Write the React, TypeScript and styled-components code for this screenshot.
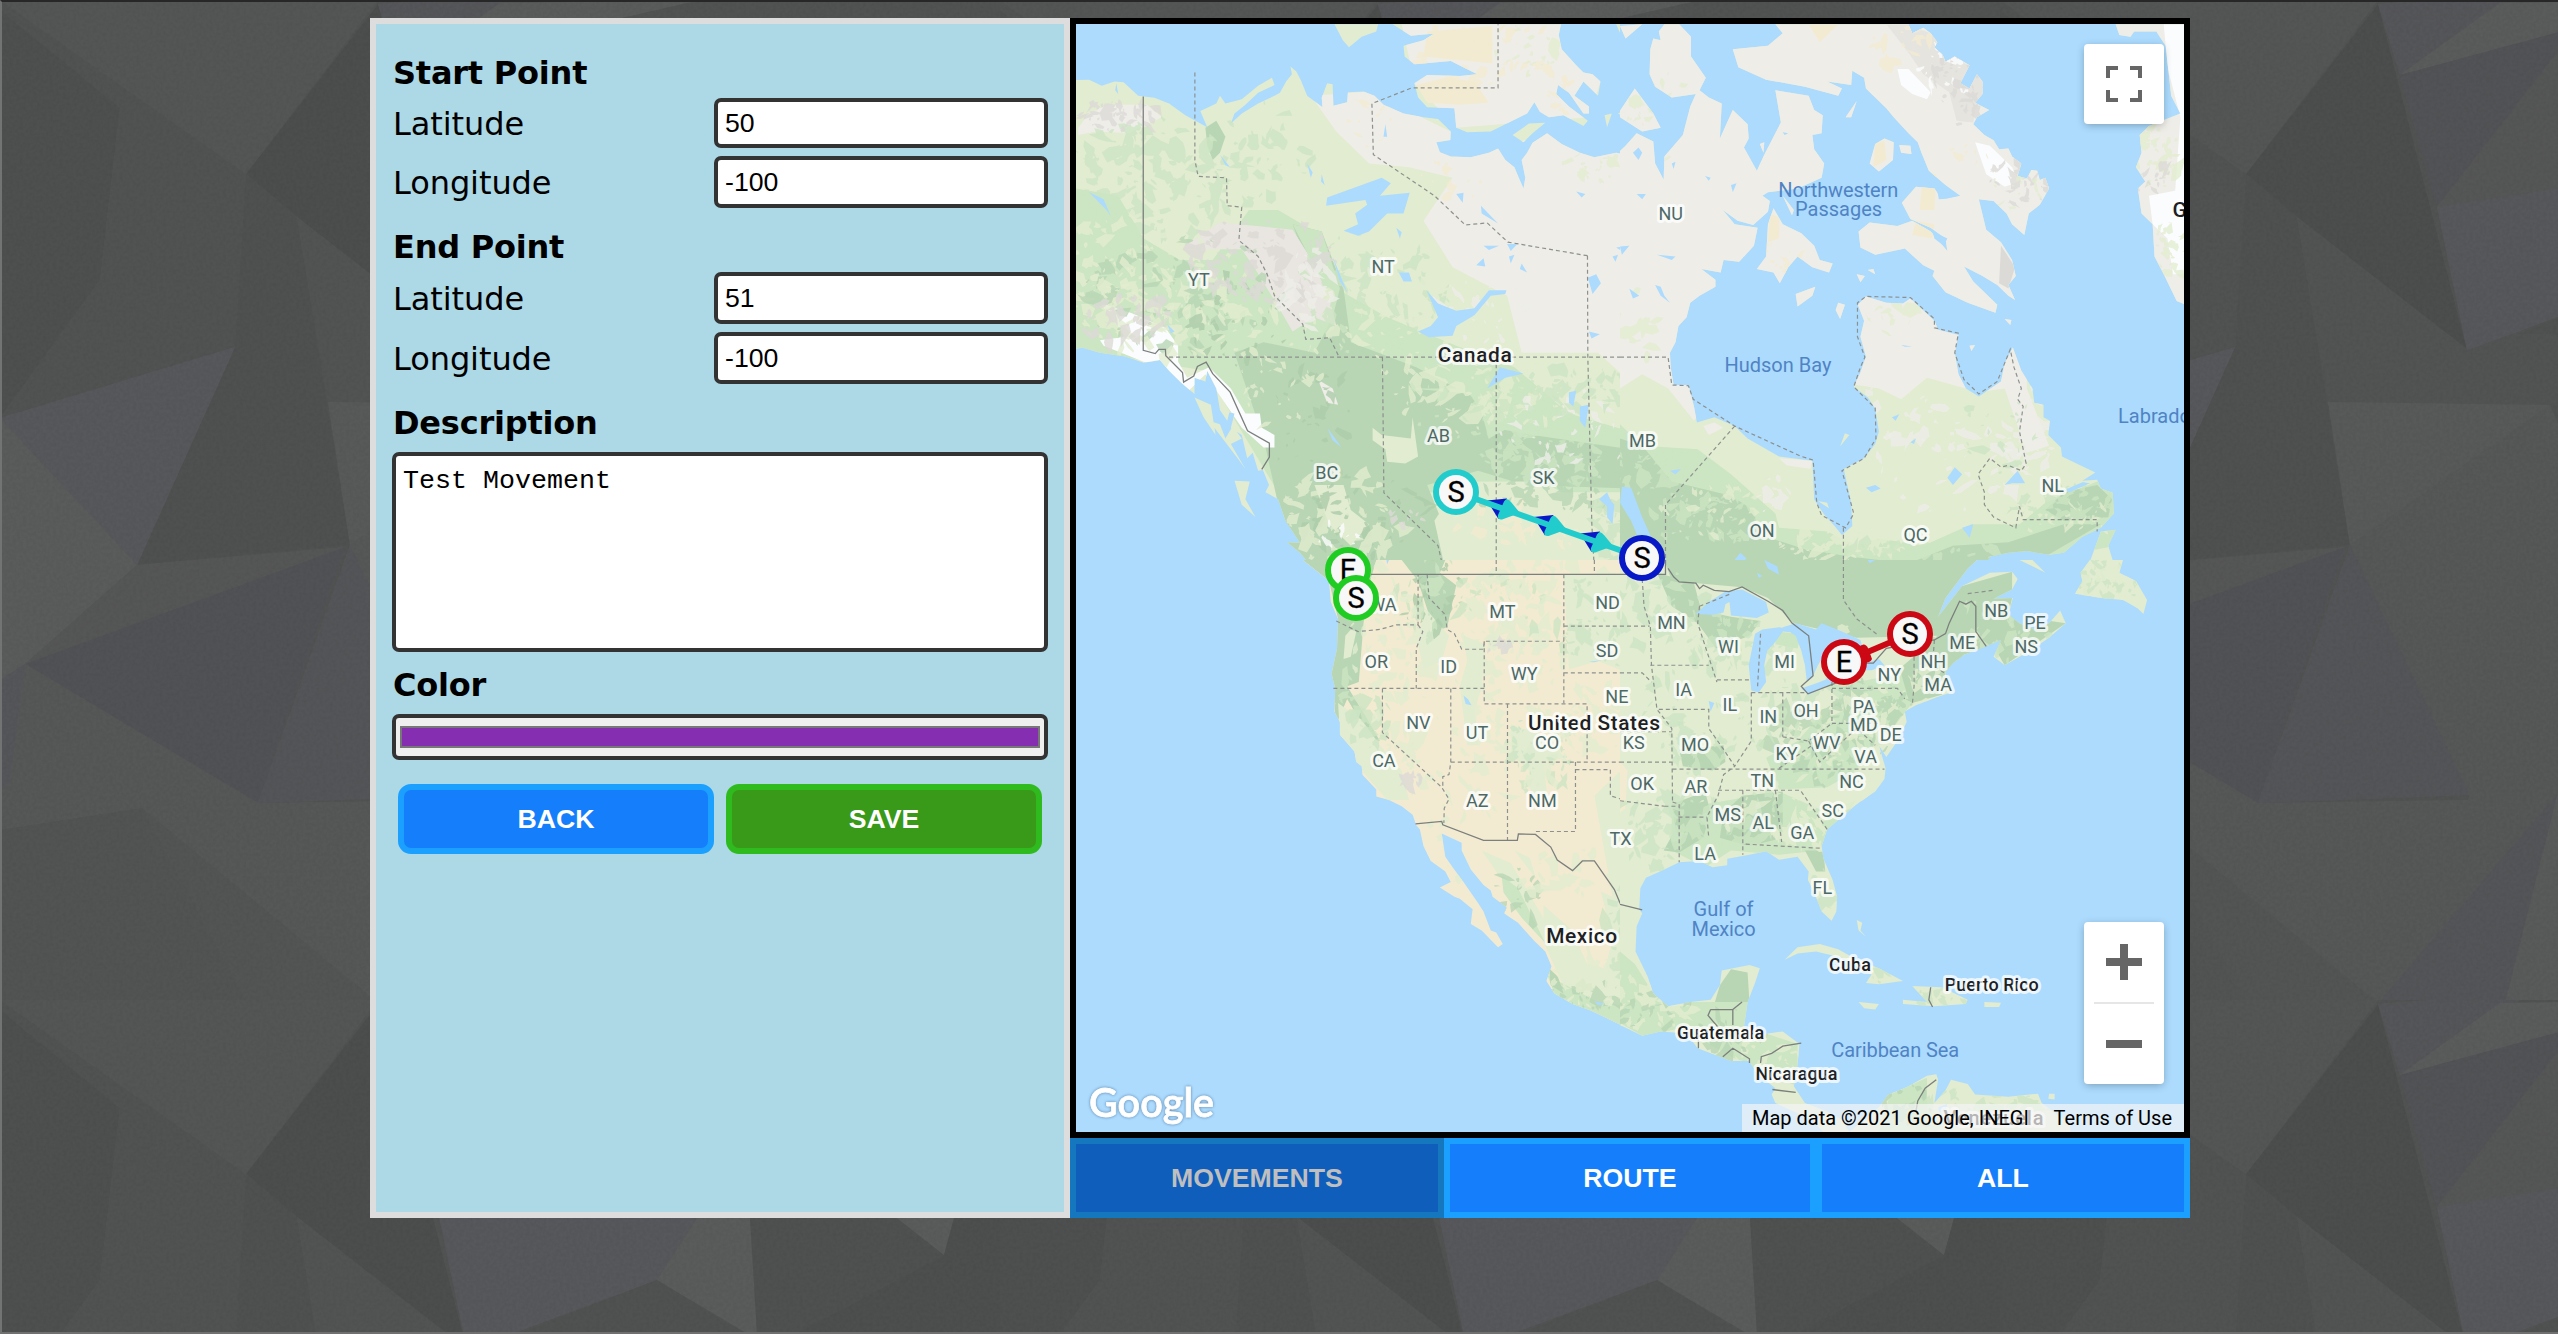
import React from "react";
import styled, { createGlobalStyle } from "styled-components";

const GlobalStyle = createGlobalStyle`
  * { box-sizing: border-box; }
  body { margin: 0; background: #535554; }
`;

/* ---------- page shell ---------- */

const Page = styled.div`
  position: relative;
  width: 100%;
  height: 1334px;
  display: flex;
  justify-content: center;
  align-items: flex-start;
  padding: 16px 0 0 2px;
  border-top: 2px solid #262726;
  border-bottom: 2px solid #6f706f;
  border-left: 2px solid #727473;
  overflow: hidden;
`;

const Backdrop = styled.svg`
  position: absolute;
  inset: -2px 0 0 -2px;
  width: 2558px;
  height: 1334px;
`;

const Workspace = styled.main`
  position: relative;
  display: flex;
  width: 1820px;
  height: 1200px;
  margin-right: 2px;
`;

/* ---------- form ---------- */

const FormPanel = styled.form`
  display: flex;
  flex-direction: column;
  width: 700px;
  padding: 26px 16px 0;
  border: 6px solid #dddddd;
  background: #add8e6;
  font-family: Verdana, "DejaVu Sans", sans-serif;
  font-size: 32px;
  color: #000;
`;

const Heading = styled.h2<{ $gap?: number }>`
  display: flex;
  align-items: center;
  height: 48px;
  margin: ${(p) => p.$gap ?? 0}px 0 0;
  padding: 0 0 2px 1px;
  font-size: 32px;
  font-weight: 700;
  letter-spacing: -0.22px;
  white-space: pre;
`;

const Field = styled.label<{ $height?: number; $gap?: number }>`
  display: grid;
  grid-template-columns: 322px 334px;
  height: ${(p) => p.$height ?? 52}px;
  margin-top: ${(p) => p.$gap ?? 0}px;
`;

const FieldName = styled.span`
  display: flex;
  align-items: center;
  padding: 1px 0 0 1px;
  letter-spacing: -0.08px;
`;

const Input = styled.input`
  width: 100%;
  height: 100%;
  padding: 0 7px;
  border: 4px solid #333333;
  border-radius: 7px;
  background: #fff;
  font: 26.67px Arial, "Liberation Sans", sans-serif;
  color: #000;
`;

const TextArea = styled.textarea`
  height: 200px;
  margin-top: 4px;
  padding: 10px 7px;
  border: 4px solid #333333;
  border-radius: 7px;
  background: #fff;
  font: 26.67px/30px "Courier New", "Liberation Mono", monospace;
  color: #000;
  resize: none;
`;

const ColorWell = styled.div`
  display: flex;
  height: 46px;
  margin-top: 4px;
  padding: 8px 4px;
  border: 4px solid #333333;
  border-radius: 7px;
  background: #efefef;
`;

const Swatch = styled.div`
  flex: 1;
  border: 2px solid #777777;
  background: #862eb1;
`;

const Actions = styled.div`
  display: flex;
  gap: 12px;
  margin-top: 24px;
  padding: 0 6px;
`;

const Button = styled.button<{ $edge: string; $fill: string }>`
  flex: 1;
  height: 70px;
  padding: 0;
  border: 6px solid ${(p) => p.$edge};
  border-radius: 13px;
  background: ${(p) => p.$fill};
  color: #fff;
  font: bold 26.67px Arial, "Liberation Sans", sans-serif;
`;

/* ---------- map column ---------- */

const MapColumn = styled.section`
  display: flex;
  flex-direction: column;
  width: 1120px;
`;

const MapFrame = styled.div`
  position: relative;
  height: 1120px;
  border: 6px solid #000;
  background: #acdbfe;
  overflow: hidden;
`;

const MapCanvas = styled.svg`
  display: block;
  width: 1108px;
  height: 1108px;
`;

const ControlStack = styled.div`
  position: absolute;
  inset: 20px 20px 48px auto;
  width: 80px;
  display: flex;
  flex-direction: column;
  justify-content: space-between;
`;

const ControlCard = styled.div`
  display: flex;
  flex-direction: column;
  align-items: center;
  border-radius: 4px;
  background: #fff;
  box-shadow: 0 2px 8px -1px rgba(0, 0, 0, 0.3);
`;

const IconButton = styled.button`
  display: flex;
  align-items: center;
  justify-content: center;
  width: 80px;
  height: 80px;
  padding: 0;
  border: 0;
  background: transparent;
`;

const Divider = styled.div`
  width: 60px;
  height: 2px;
  background: #e6e6e6;
`;

const Attribution = styled.div`
  position: absolute;
  right: 0;
  bottom: 0;
  display: flex;
  justify-content: space-between;
  align-items: center;
  width: 442px;
  height: 28px;
  padding: 0 12px 0 10px;
  background: rgba(245, 245, 245, 0.7);
  font: 20px/28px Roboto, Arial, sans-serif;
  color: #000;
  white-space: nowrap;
`;

const Tabs = styled.nav`
  display: grid;
  grid-template-columns: 374px 372px 374px;
  height: 80px;
`;

const Tab = styled.button`
  padding: 0;
  border: 6px solid #1ca0ff;
  background: #157efb;
  color: #fff;
  font: bold 26.67px Arial, "Liberation Sans", sans-serif;
  &:disabled {
    border-color: #1578bf;
    background: #105ebc;
    color: #bfbfbf;
  }
`;

/* ---------- backdrop facets, one 1000px repeat ---------- */

const facets: [string, string][] = [
  ["0,0 378,0 246,174", "#545655"],
  ["0,10 120,108 100,280 0,418", "#4e504f"],
  ["120,108 246,174 235,347 0,418 100,280", "#515352"],
  ["246,174 297,217 350,545 137,565 235,347", "#4f5150"],
  ["246,174 378,4 467,350 297,217", "#4c4e4d"],
  ["0,418 235,347 137,565", "#57585b"],
  ["0,418 137,565 25,664 0,680", "#5a5c5b"],
  ["137,565 345,547 25,664", "#555756"],
  ["25,664 345,547 258,803", "#515255"],
  ["25,664 258,803 470,800 378,1003 142,808 0,830 0,680", "#565857"],
  ["0,680 25,664 10,780 0,790", "#55565a"],
  ["258,803 350,545 470,795", "#545558"],
  ["0,830 142,808 378,1003 246,1000 0,1000", "#525453"],
  ["142,808 378,1003 246,1000", "#535554"],
  ["297,217 467,349 560,318 750,334 560,405 328,402", "#525453"],
  ["328,402 550,405 350,545", "#585a59"],
  ["350,545 550,405 600,520 600,790 470,795", "#565857"],
  ["470,795 558,790 600,900 378,1003", "#565857"],
  ["378,1003 558,793 505,1003", "#545558"],
  ["505,1003 558,793 700,1003", "#595b5a"],
  ["378,4 430,0 520,0 400,75", "#555659"],
  ["400,75 500,3 700,0 560,32", "#5a5c5b"],
  ["400,75 570,29 570,40 437,207", "#525356"],
  ["437,207 570,36 700,150 570,188", "#555756"],
  ["437,207 570,187 697,218 657,280 517,332 467,350", "#57585b"],
  ["697,218 750,218 757,334 748,334 657,280", "#5a5c5b"],
  ["657,280 748,336 517,334", "#505251"],
  ["750,218 897,218 944,255 795,334 757,334", "#4f5150"],
  ["897,218 954,218 944,255", "#5a5c5b"],
  ["795,334 944,255 954,218 1000,218 1000,360", "#4d4f4e"],
];

function BackdropArt() {
  return (
    <Backdrop viewBox="0 0 2558 1334" aria-hidden>
      <defs>
        <pattern id="facets" width="1000" height="1000" patternUnits="userSpaceOnUse">
          <rect width="1000" height="1000" fill="#515352" />
          {facets.map(([points, fill]) => (
            <polygon key={points} points={points} fill={fill} />
          ))}
        </pattern>
        <filter id="grain" x="0" y="0" width="100%" height="100%">
          <feTurbulence type="fractalNoise" baseFrequency="0.3" numOctaves="2" seed="4" />
          <feColorMatrix values="0 0 0 0 0  0 0 0 0 0  0 0 0 0 0  0.5 0 0 0 -0.17" />
        </filter>
      </defs>
      <rect width="2558" height="1334" fill="url(#facets)" />
      <rect width="2558" height="1334" filter="url(#grain)" opacity="0.16" />
    </Backdrop>
  );
}

/* ---------- map data ---------- */

const C = {
  water: "#acdbfe",
  pale: "#e2ecd0",
  mid: "#cce5c3",
  forest: "#b8d6b4",
  deep: "#accca9",
  barren: "#eeede8",
  rock: "#dcdad6",
  sand: "#f3ebd1",
  snow: "#fbfcfe",
};

// Speckle: cx, cy, rx, ry, count, size, colour
type Speckle = [number, number, number, number, number, number, string];

type Tile = {
  id: string;
  x: number;
  y: number;
  w: number;
  h: number;
  base: string;
  land: string;
  cover: [string, string][];
  speckles: Speckle[];
  lakes: string;
  solid: string;
  dashed: string;
};

const SIDE = 1568;

const tiles: Tile[] = [
  {
    id: "nw",
    x: 1060,
    y: 10,
    w: 570,
    h: 560,
    base: C.pale,
    land:
      "M40 196L80 195L115 212L150 200L175 202L215 240L260 246L300 262L345 295L405 328L386 283L430 262L440 240L455 262L500 250L545 212L583 190L590 210L545 232L510 265L480 290L470 318L500 290L545 262L590 240L605 232L622 200L638 180L634 158L650 172L662 195L680 240L722 272L720 245L735 205L750 208L752 268L790 258L792 230L835 228L865 240L890 265L945 290L1000 300L1040 305L1075 340L1074 364L1035 370L1045 398L1075 410L1130 412L1180 400L1205 388L1225 420L1250 440L1262 470L1275 500L1280 470L1270 420L1285 400L1300 372L1340 345L1380 375L1430 400L1470 412L1530 400L1568 408V1568H700L660 1520L625 1490L660 1492L620 1430L600 1370L565 1350L575 1330L558 1288L545 1290L530 1240L515 1255L500 1190L470 1170L480 1130L440 1120L430 1060L405 1010L400 1040L370 1030L370 1075L335 1045L300 1010L275 980L230 988L180 970L110 960L60 945L40 950Z" +
      "M755 40H875L870 60L830 75L795 104L778 85Z" +
      "M915 40L965 72L1030 66L1000 85L945 100L948 130L975 152L1075 143L1148 180L1100 185L1010 182L975 205L985 245L1010 272L1085 275L1090 330L1120 342L1185 340L1225 320L1285 290L1305 258L1320 285L1345 300L1385 295L1440 325L1452 310L1400 270L1365 235L1370 210L1400 232L1440 290L1455 290L1455 270L1415 240L1440 200L1480 240L1487 200L1465 180L1440 175L1420 155L1380 110L1372 70L1378 40Z" +
      "M1245 350L1290 318L1335 316L1300 345L1275 370ZM1498 295L1518 290L1505 328ZM1530 40H1568V80L1545 75ZM1535 290L1568 270V310Z" +
      "M370 1085L415 1105L428 1190L395 1140ZM410 1150L440 1160L455 1200L475 1165L500 1200L470 1215L510 1285L485 1250ZM480 1318L522 1320L510 1370L538 1420L500 1385ZM430 1050L470 1110L460 1150L440 1120Z",
    cover: [
      ["M690 240L850 228L1075 340V410L1205 388L1340 345L1568 400V1040L1480 960L1270 960L1230 800L1080 720L1000 590L1080 470L960 440L850 430L760 340Z", C.barren],
      ["M940 40H1378L1487 200L1455 300L1090 330L975 205Z", C.barren],
      ["M44 500L160 520L230 640L330 700L420 700L520 560L600 560L700 620L760 780L900 860L1090 940L1250 1000L1400 1130L1568 1180V1350H600L400 1010L44 950Z", C.mid],
      ["M640 600L720 620L780 780L800 930L980 1000L1130 1080L1190 1170L1300 1190L1568 1230V1340L1280 1330L1150 1290L1010 1330L1050 1430L1060 1568H640L560 1200L480 960L560 930L700 960L740 880Z", C.forest],
      ["M640 600L720 620L770 780L750 860L690 700Z", C.mid],
      ["M960 1060L1200 1080L1270 1150L1180 1200L1140 1060Z", C.mid],
      ["M1100 1320L1330 1320L1460 1400L1470 1568H1060L1030 1430Z", C.pale],
      ["M50 330L80 290L130 265L240 265L280 300L190 345L100 340L50 350Z", C.barren],
      ["M330 670L440 595L640 615L680 680L740 800L760 885L700 860L640 900L600 830L540 730L500 670Z", "#e9e6e1"],
      ["M110 820L200 850L290 890L325 940L325 985L350 1030L410 1000L470 1060L510 1130L550 1130L555 1170L590 1190L590 1225L560 1225L500 1170L440 1080L400 1020L350 1070L290 1000L230 985L120 940L110 925L180 915L140 860Z", C.snow],
      ["M400 330L430 310L455 355L440 400L420 420L405 380Z", C.forest],
      ["M860 1170L885 1190L965 1200L970 1140L985 1250L950 1270L900 1265L895 1230L860 1205Z", C.pale],
      ["M700 1330L780 1330L800 1400L850 1440L800 1500L740 1440Z", C.pale],
      ["M710 1035L750 1060L765 1105L735 1100Z", C.barren],
      ["M980 210L1060 190L1140 200L1180 260L1100 265L1010 260Z", C.sand],
      ["M1010 60L1190 45L1190 150L1000 130Z", C.sand],
    ],
    speckles: [
      [250, 480, 220, 160, 130, 30, C.mid],
      [200, 740, 200, 170, 90, 30, C.pale],
      [350, 800, 260, 150, 80, 24, C.forest],
      [320, 820, 260, 150, 120, 24, C.pale],
      [480, 880, 130, 130, 30, 20, C.deep],
      [560, 400, 140, 140, 40, 24, C.mid],
      [850, 800, 200, 160, 70, 26, C.mid],
      [900, 880, 230, 130, 70, 24, C.pale],
      [1170, 850, 120, 130, 30, 22, C.barren],
      [1200, 1080, 260, 110, 90, 26, C.pale],
      [1180, 1100, 250, 90, 50, 24, C.mid],
      [700, 1180, 110, 200, 40, 20, C.deep],
      [600, 1040, 120, 120, 30, 20, C.pale],
      [840, 1420, 170, 110, 40, 24, C.deep],
      [780, 1420, 160, 120, 60, 24, C.pale],
      [1370, 1250, 200, 80, 80, 24, C.mid],
      [1400, 1180, 190, 110, 40, 18, C.barren],
      [560, 700, 190, 110, 90, 24, C.rock],
      [690, 780, 70, 100, 40, 22, C.barren],
      [160, 300, 110, 40, 50, 18, C.rock],
      [180, 870, 120, 60, 40, 24, C.rock],
      [1250, 1460, 160, 90, 30, 26, C.sand],
      [1360, 1350, 220, 50, 50, 24, C.forest],
      [1520, 1460, 60, 100, 40, 24, C.mid],
      [1100, 480, 100, 70, 14, 20, C.sand],
      [1180, 120, 180, 90, 40, 24, C.sand],
      [1280, 110, 80, 70, 20, 22, C.pale],
      [1400, 250, 80, 60, 20, 18, C.sand],
      [1430, 1080, 140, 80, 50, 24, C.mid],
      [750, 1480, 70, 40, 14, 18, C.snow],
      [960, 1410, 50, 40, 12, 16, C.rock],
      [1450, 440, 90, 40, 20, 18, C.pale],
      [860, 310, 60, 80, 12, 18, C.sand],
    ],
    lakes:
      "M732 548L735 525L885 470L910 485L880 520L962 512L945 570L900 570L850 620L820 632L780 618L820 600L812 570L845 545L840 532Z" +
      "M1008 785L1040 822L1090 842L1140 835L1180 785L1228 785L1225 795L1185 800L1140 855L1090 885L1080 912L1015 916L985 900L1020 885L1040 860Z" +
      "M1175 1060L1210 1000L1275 1018L1225 1030ZM1452 750L1475 740L1488 765L1465 795ZM1158 548L1205 598L1160 570ZM1145 715L1165 695L1170 718ZM1165 660L1208 660L1180 672ZM1235 690L1250 685L1240 710Z" +
      "M1540 1340L1568 1330V1440L1545 1400ZM1400 1070L1420 1066L1412 1110L1400 1100ZM1430 1110L1455 1105L1445 1170L1430 1150ZM1483 1370L1505 1350L1515 1375L1525 1385L1520 1440L1505 1420L1505 1390Z" +
      "M932 735L960 735L968 760L945 760ZM680 430L695 455L690 470ZM720 460L728 490L718 480ZM440 405L468 440L455 435ZM895 320L900 355L890 355ZM925 610L940 622L935 640ZM155 205L160 235L152 225ZM750 690L790 790L770 760ZM735 1170L775 1225L750 1205Z" +
      "M1230 655L1258 655L1240 675ZM1270 710L1285 735L1265 725ZM1420 508L1445 515L1435 525ZM1455 900L1485 908L1462 920ZM1530 665L1565 660L1545 675ZM1520 690L1535 685L1528 705ZM1090 515L1110 512L1108 540ZM295 880L315 900L305 905ZM80 510L120 530L140 578L128 560Z",
    solid: "M229 242V953L262 962L272 950H290L291 968L337 1015L340 1042L368 1025L378 998L402 986L420 1018L468 1070L516 1178L576 1213V1252L555 1286",
    dashed:
      "M371 175V420L380 466L458 470L460 548L500 552L492 645L545 690L570 740L590 800L668 880L676 922L742 918L768 972M300 972H1568M887 972L891 1352L1040 1500L1055 1568M1200 972V1568M1451 688L1452 972L1463 1440L1470 1568M1451 688L1232 650L1175 596L1115 602L1030 520L862 405L858 262L968 218H1205V40",
  },
  {
    id: "ne",
    x: 1620,
    y: 10,
    w: 580,
    h: 560,
    base: C.pale,
    land:
      "M0 395L15 380L45 345L90 368L95 430L118 475L120 410L170 350L190 270L205 235L140 245L95 215L80 180L82 110L90 80L110 85L105 60L120 40H160L192 75V130L232 190L215 225L240 245L275 262L270 360L305 280L345 320L348 360L335 385L370 450L390 405L435 315L420 225L510 240L525 280L548 295L545 345L520 350L525 390L552 430L545 470L480 500L400 510L385 520L405 535L400 565L360 602L318 590L278 560L310 600L372 610L362 660L322 705L280 700L272 735L220 725L258 755V775L215 800L190 820L180 860L158 885L150 930L135 960L137 1000L145 1050H185L200 1110L208 1155L255 1140L310 1165L345 1200L430 1250L520 1262L525 1370L550 1410L580 1445L600 1470L628 1445L625 1380L605 1285L660 1255L690 1215L700 1180L690 1115L670 1085L632 1055L650 1015L665 970L650 915L660 870L643 825L665 802L720 820L765 822L785 808L850 870L860 895L915 910L905 960L915 1020L935 1060L970 1082L1030 1040L1040 990L1062 945L1085 1010L1115 1060L1120 1100L1145 1105V1140L1162 1150L1158 1190L1192 1225L1195 1250L1285 1295L1250 1318L1290 1315L1300 1340L1332 1352L1335 1410L1300 1450L1250 1475L1200 1520L1160 1525L1100 1515L1050 1520L1000 1530L985 1568H0Z" +
      "M285 40H420L440 65L400 100L305 110L320 160L395 195L500 215L590 240L600 220L560 200L625 210L628 170L660 190L655 160L665 220L690 245L720 275L740 300L780 345L805 370L815 400L835 450L880 490L920 520L870 530L850 500L800 495L762 540L785 585L840 610L880 640L885 675L840 620L790 590L750 605L675 595L645 620L650 665L690 685L770 668L820 715L850 730L845 745L880 790L940 820L1015 848L1020 825L955 760L930 718L980 745L1020 770L1050 800L1068 812L1050 770L1070 745L1060 700L1030 650L990 615L970 530L1010 535L1045 570L1060 600L1093 630L1105 570L1135 545L1160 500L1150 470L1135 476L1128 450L1112 448L1100 472L1075 465L1085 430L1060 410L1050 388L1025 390L1010 365L985 350L955 320L965 300L998 280L960 260L980 235V200L965 180L945 220L920 205L945 155L905 130L880 145L872 125L850 105L858 90L840 65L820 50L790 65L780 40Z" +
      "M415 555L440 600L490 625L525 660L540 700L575 710L565 735L520 720L480 690L455 720L432 765L415 735L370 725L395 690L400 600ZM475 795L528 775L520 800L480 830ZM590 820L608 825L595 865L583 840ZM690 375L715 360L740 370L738 420L700 452L675 430ZM595 1222L608 1185L620 1190ZM755 378L785 380L788 403L760 400ZM378 375L390 370L388 400ZM640 740L662 745L650 762ZM1040 865L1058 868L1055 882ZM945 940L960 938L950 955ZM440 520L470 560L465 575ZM610 300L640 255L625 300ZM670 728L685 725L690 740Z" +
      "M1340 40H1530V825L1505 815L1470 740L1445 690L1440 600L1410 570L1400 500L1420 480L1395 440L1410 400L1405 350L1430 325L1515 290L1490 240L1475 100L1450 60L1390 60L1380 75L1350 70Z" +
      "M0 282L40 220L90 290L110 330L60 340L0 300ZM0 45L60 40L15 80ZM1340 1455L1300 1460L1262 1568H1340L1320 1500ZM1070 1540L1110 1540L1150 1568H1110ZM535 1375L560 1380L565 1395Z",
    cover: [
      ["M0 40H1568V830H1100V1060L1160 1220L1100 1240L1040 1060L970 1070L900 1050L830 1030L760 1090L700 1060L640 1050L300 1000L200 1150L130 1060L60 1020L0 1060Z", C.barren],
      ["M225 1165L255 1155L280 1170L240 1190ZM430 1255L520 1262L515 1285L450 1275Z", C.barren],
      ["M0 1160L60 1220L210 1230L300 1300L420 1410L430 1450L560 1460L640 1500L700 1480L820 1500L950 1440L1080 1440L1150 1380L1290 1320L1340 1350V1500L1000 1568H0Z", C.mid],
      ["M0 1200L60 1220L140 1320L300 1360L360 1400L380 1470L500 1510L620 1530L780 1550L900 1500L1050 1490L1200 1440L1300 1440L1150 1530L1000 1530V1568H0Z", C.forest],
      ["M1150 1400L1200 1350L1290 1330L1330 1370L1320 1420L1200 1430Z", C.forest],
      ["M1470 40H1530V640L1500 520L1515 300L1480 160Z", C.snow],
      ["M1430 520L1530 500V740L1495 740L1480 640L1440 600Z", C.snow],
      ["M720 40H780L850 70L860 100L940 155L980 200V240L960 280L955 315L910 310L890 230L820 180L780 120Z", "#e6e4df"],
      ["M1030 660L1068 720L1050 780L1025 765Z", C.rock],
      ["M750 165L780 165L840 230L830 250L790 235L760 210Z", C.snow],
      ["M960 370L1000 380L1060 440L1080 480L1040 495L990 460Z", C.snow],
      ["M290 40H400V90L340 95L300 75ZM510 40H590L540 90Z", C.sand],
      ["M800 590L850 600L845 640L790 630ZM820 450L855 460L850 560L810 560ZM405 570L430 580L430 640L400 650ZM690 375L715 365L720 420L685 440Z", C.sand],
    ],
    speckles: [
      [900, 140, 90, 90, 40, 20, C.snow],
      [920, 210, 80, 100, 40, 18, C.rock],
      [1080, 480, 80, 60, 30, 20, C.rock],
      [1070, 510, 70, 50, 14, 16, C.pale],
      [1460, 400, 70, 90, 40, 24, C.pale],
      [1430, 470, 50, 50, 16, 20, C.rock],
      [1490, 660, 50, 90, 26, 18, C.pale],
      [40, 900, 60, 110, 14, 24, C.pale],
      [50, 260, 60, 60, 20, 22, C.pale],
      [120, 300, 60, 120, 14, 18, C.pale],
      [830, 60, 200, 60, 10, 20, C.sand],
      [740, 90, 80, 60, 10, 22, C.sand],
      [940, 400, 60, 30, 8, 20, C.sand],
      [730, 870, 70, 50, 12, 24, C.pale],
      [880, 1280, 200, 120, 44, 24, C.barren],
      [760, 1130, 110, 90, 22, 26, C.barren],
      [1110, 1160, 60, 130, 40, 22, C.barren],
      [1000, 1180, 120, 110, 20, 20, C.mid],
      [1200, 1390, 130, 50, 50, 20, C.mid],
      [1200, 1420, 150, 40, 30, 16, C.pale],
      [230, 1430, 140, 80, 60, 20, C.mid],
      [250, 1400, 130, 70, 40, 16, C.pale],
      [80, 1290, 120, 60, 40, 24, C.mid],
      [600, 1500, 160, 40, 60, 22, C.pale],
      [800, 1520, 200, 30, 40, 24, C.mid],
      [400, 1350, 50, 80, 12, 22, C.barren],
      [430, 700, 60, 50, 12, 18, C.sand],
    ],
    lakes:
      "M5 1335L30 1338L60 1420L95 1500L110 1550L70 1530L30 1430L0 1380ZM665 1338L690 1330L705 1340L680 1350ZM885 1310L905 1280L925 1300L900 1330ZM1040 1330L1075 1290L1095 1325L1060 1325ZM310 1540L325 1520L342 1535L322 1560ZM925 1450L955 1440L945 1478ZM1200 1345L1250 1322L1270 1325L1215 1350Z" +
      "M35 400L50 385L60 400L50 420ZM230 465L245 470L240 478ZM300 490L315 485L305 510ZM100 685L150 690L140 700ZM95 770L110 775L120 800L135 820L110 800ZM25 780L52 800L35 808ZM140 430L150 425L145 445ZM440 342L455 345L445 350ZM0 662L25 660L5 685ZM45 515L70 515L60 530ZM735 1140L755 1132L745 1150ZM785 1210L800 1200L795 1215ZM855 490L870 485L885 500L918 520L885 528L862 530ZM760 938L790 942L770 943ZM135 1290L165 1285L150 1300Z" +
      "M845 620L885 640L875 660L850 640Z",
    solid: "",
    dashed:
      "M0 972H130L140 1050L185 1052L198 1090L310 1165L490 1250L522 1260L532 1380L545 1415L610 1450L632 1410L600 1290L660 1255L692 1200L690 1115L632 1055L650 1000L662 972L642 915V820L665 802L785 805L850 865V890L915 905L905 960L930 1035L970 1075L1020 1040L1055 950L1065 1000L1085 1060L1075 1090L1090 1110L1080 1180L1098 1270L1085 1290L1050 1275L1030 1280L1000 1255L968 1300L985 1350L985 1385L1010 1420L1070 1450L1080 1390L1090 1427H1290V1460M310 1165L123 1385V1568M604 1450V1568",
  },
  {
    id: "sw",
    x: 1060,
    y: 560,
    w: 570,
    h: 660,
    base: C.sand,
    land:
      "M668 0L740 50L745 100L765 140L762 210L747 270L757 305L755 360L770 385V415L810 455L815 480L830 490L832 510L870 545V562L905 570L940 585L970 605L980 630L990 640L1000 680L1020 715L1060 740L1075 765L1045 778L1085 800L1100 805L1135 830L1130 865L1160 880L1205 920L1218 912L1200 885L1185 880L1165 835L1150 815L1110 765L1080 730L1060 705L1050 650L1105 672V690L1130 735L1165 772L1185 785L1190 800L1228 825L1222 840L1260 862L1305 905L1335 930L1352 965L1338 1000L1360 1030L1410 1055L1460 1070L1520 1095L1568 1115V0Z",
    cover: [
      ["M880 0H1568V36L1480 60L1568 260V0Z", C.pale],
      ["M1386 34H1568V270L1480 240L1400 260Z", C.pale],
      ["M1470 560L1568 480V1115L1460 1070L1400 1040L1300 850L1200 740L1160 690L1240 720L1330 850L1330 780L1250 690L1420 760L1520 800Z", C.pale],
      ["M1330 690L1400 740L1480 760L1520 900L1500 970L1440 940L1410 880L1330 820L1290 700Z", C.sand],
      ["M1420 900L1500 920V970L1450 960Z", C.sand],
      ["M668 0H870L850 60L835 150L822 290L790 300L840 370L880 430L855 425L790 330L760 390L745 270L765 140L740 50Z", C.forest],
      ["M800 165L815 170L800 230L780 235L785 180Z", C.pale],
      ["M765 340L830 380L880 440L940 500L960 570L900 570L830 500L770 415Z", C.pale],
      ["M940 0H1060L1045 30L1090 60L1065 160L1030 170L1000 90L985 50Z", C.forest],
      ["M1000 110L1070 180L1050 240L1000 260L985 200Z", C.pale],
      ["M1110 180L1170 200L1160 300L1140 360L1150 440L1120 440L1100 300L1120 240Z", C.pale],
      ["M1240 390L1330 420L1390 470L1330 480L1340 560L1300 590L1290 500L1240 460Z", C.pale],
      ["M1215 750L1260 780L1300 850L1335 910L1270 850L1220 790Z", C.mid],
      ["M1340 985L1370 1000L1480 1050L1568 1060V1115L1410 1055L1360 1030Z", C.mid],
      ["M1345 970L1370 990L1385 1030L1350 1010Z", C.forest],
    ],
    speckles: [
      [1020, 80, 80, 80, 24, 20, C.deep],
      [1020, 80, 100, 100, 30, 22, C.mid],
      [900, 100, 120, 90, 30, 24, C.pale],
      [1230, 130, 130, 110, 50, 26, C.pale],
      [1260, 240, 120, 80, 40, 26, C.pale],
      [1210, 110, 110, 80, 20, 18, C.mid],
      [1330, 60, 200, 60, 40, 26, C.pale],
      [910, 240, 110, 60, 24, 24, C.pale],
      [1150, 330, 70, 160, 50, 24, C.pale],
      [1310, 460, 100, 90, 40, 20, C.mid],
      [1320, 450, 120, 90, 50, 24, C.pale],
      [860, 390, 60, 60, 22, 22, C.mid],
      [930, 460, 60, 60, 20, 24, C.pale],
      [960, 380, 80, 60, 12, 26, C.pale],
      [1110, 560, 130, 60, 16, 26, C.pale],
      [790, 330, 50, 50, 14, 22, C.mid],
      [1470, 160, 100, 110, 36, 22, C.mid],
      [1480, 380, 100, 80, 40, 26, C.pale],
      [1260, 800, 60, 80, 20, 22, C.forest],
      [1450, 1040, 120, 36, 36, 20, C.forest],
      [1460, 1000, 120, 60, 40, 24, C.pale],
      [1400, 750, 120, 60, 24, 24, C.pale],
      [1540, 900, 40, 110, 26, 24, C.mid],
      [1060, 680, 80, 90, 12, 16, C.pale],
      [960, 520, 30, 20, 8, 20, C.rock],
      [1210, 210, 30, 20, 8, 20, C.rock],
    ],
    lakes:
      "M1110 322L1122 330L1132 345L1116 342ZM1455 242L1490 238L1470 243ZM898 0H905L900 10ZM1470 1048L1500 1055L1480 1058Z",
    solid: "M855 34H1568M978 627L1050 621L1053 629L1165 666H1258L1261 651L1308 652L1350 682L1368 713L1410 738L1437 715H1470L1525 783L1542 818L1568 826",
    dashed:
      "M760 145L820 170L880 165L925 154H985V34M985 154L998 170L980 210V305M752 305H1167M887 305V410L1050 540L1070 568L1057 590L1056 625M1075 305V480L1070 510L1053 515V540M1010 34L1015 90L1060 130L1065 165L1085 175L1105 212H1165L1167 193H1386M1167 193V342H1450V480M1386 34V340M1386 157H1568M1386 268H1568M1231 342V665M1075 480H1568M1418 480V645H1308M1418 498H1514V560L1568 575M1200 0V34M1470 0V34",
  },
  {
    id: "se",
    x: 1620,
    y: 560,
    w: 580,
    h: 660,
    base: C.pale,
    land:
      "M0 0H965L940 20L880 90L860 135L925 62L1000 30L1060 28L1075 45L1060 70L1010 92L1062 90L1050 130L1080 150L1120 165L1160 150L1190 120L1205 150L1160 185L1110 215L1040 250L1010 230L1030 190L990 205L930 225L900 245L880 265V290L895 315L860 325L800 345L770 360L775 385L750 430L720 468L700 440L718 495L715 520L690 550L640 580L600 610L560 640L545 680L550 710L575 760L587 800L585 835L572 857L545 835L525 790L508 760L510 740L480 705L430 712L395 692L350 700L290 710V725L250 730L215 715L160 718L120 735L70 755L55 780L52 830L60 840L45 870L42 930L75 990L90 1030L130 1060L190 1050L245 1045L270 1010L275 975L350 962L378 970L365 1005L345 1050L335 1110L370 1135L400 1125L440 1120L485 1150L480 1200L470 1250L500 1290L560 1310L600 1330L620 1359L700 1300L725 1270L755 1260L780 1250L830 1225L855 1222L860 1235L850 1290L880 1260L895 1235L940 1245L960 1270L1050 1275L1130 1268L1140 1290L1215 1340L1220 1370H560L520 1330L470 1310L420 1290L410 1270L420 1255L370 1220L350 1190L300 1190L210 1160L180 1125L110 1120L60 1130L0 1105Z" +
      "M445 950L480 920L540 912L590 925L640 950L700 970L765 1000L700 1008L665 1005L680 985L600 945L530 930L480 935ZM790 1012L870 1015L940 1045L935 1055L850 1060L765 1055V1045L830 1050ZM645 1050L700 1055L690 1068L660 1065ZM985 1050L1030 1052L1025 1062L985 1062ZM640 855L655 862L650 880L665 895L645 880ZM1160 1268H1175V1282L1158 1280Z" +
      "M1230 80L1250 50L1245 30L1270 0H1360L1350 30L1395 50L1425 95L1415 128L1400 115L1360 95L1300 90ZM1080 0H1115L1150 30ZM1030 128L1080 160L1100 168L1080 170Z",
    cover: [
      ["M120 0H965L925 62L1060 28L1060 90L1050 130L1205 150L1040 250L1010 205L930 225L880 265L870 320L790 340L700 300L860 180L640 185L470 150L400 90L330 65L140 50Z", C.forest],
      ["M100 30L200 55L220 120L300 135L380 145L350 180L260 210L210 150L140 110Z", C.forest],
      ["M420 170L490 175L480 210L420 200Z", C.mid],
      ["M395 470L480 430L520 390L600 360L700 300L790 340L720 420L640 500L560 540L430 545Z", C.mid],
      ["M140 610L230 580L430 550L560 600L640 570L540 690L430 700L300 690L230 730L140 690Z", C.mid],
      ["M160 450L280 440L285 480L250 500L170 490ZM140 580L230 550L245 600L225 660L160 695L118 690L150 640Z", C.forest],
      ["M330 560L440 550L440 660L350 680L270 660L280 600ZM500 690L550 690L555 740L530 740Z", C.forest],
      ["M550 250L640 290L760 270L780 330L640 330L560 300Z", C.mid],
      ["M270 1010L300 972L345 980L350 1050L250 1070Z", C.forest],
      ["M190 1050H345V1110L480 1150V1250L370 1210L300 1180L180 1120Z", C.mid],
      ["M0 930L40 960L90 1030L130 1060L230 1060L180 1110L60 1130L0 1100Z", C.mid],
      ["M730 1270L830 1230L830 1359H700Z", C.mid],
      ["M0 480L20 500L15 590L0 600Z", C.sand],
    ],
    speckles: [
      [100, 110, 120, 90, 40, 24, C.mid],
      [280, 180, 90, 80, 50, 24, C.mid],
      [450, 220, 50, 60, 20, 20, C.mid],
      [560, 440, 150, 100, 70, 28, C.forest],
      [600, 480, 120, 90, 40, 20, C.pale],
      [680, 350, 120, 60, 50, 24, C.forest],
      [680, 370, 110, 60, 30, 20, C.pale],
      [210, 460, 90, 60, 30, 24, C.mid],
      [200, 620, 100, 70, 40, 24, C.mid],
      [370, 620, 140, 60, 50, 24, C.mid],
      [380, 580, 150, 70, 30, 20, C.pale],
      [500, 640, 80, 50, 30, 24, C.pale],
      [560, 780, 40, 70, 14, 22, C.mid],
      [60, 640, 100, 90, 34, 26, C.mid],
      [450, 370, 160, 90, 40, 22, C.mid],
      [160, 350, 150, 110, 20, 26, C.mid],
      [1000, 130, 90, 80, 20, 22, C.mid],
      [1060, 200, 110, 50, 20, 20, C.mid],
      [1320, 50, 90, 50, 40, 24, C.mid],
      [1320, 70, 90, 40, 20, 20, C.pale],
      [870, 260, 60, 60, 34, 22, C.forest],
      [820, 300, 50, 50, 14, 18, C.pale],
      [60, 1050, 130, 60, 50, 24, C.pale],
      [60, 1070, 130, 46, 24, 20, C.forest],
      [400, 1180, 90, 60, 30, 22, C.pale],
      [300, 1120, 90, 60, 24, 22, C.forest],
      [1000, 1300, 180, 40, 50, 24, C.mid],
      [780, 1290, 60, 50, 20, 22, C.forest],
      [720, 990, 60, 20, 14, 18, C.mid],
      [850, 1035, 90, 25, 20, 18, C.mid],
      [700, 170, 120, 60, 8, 18, C.pale],
    ],
    lakes:
      "M205 128L240 100L285 75L330 70L395 100L402 125L370 138L300 132L296 100L285 105L280 125L250 130Z" +
      "M355 310L348 250L365 175L385 165L430 160L480 165L470 172L440 170L415 200L398 215L390 250L395 290L375 315Z" +
      "M440 160L475 150L530 165L545 150L600 170L650 190L655 205L610 205L560 215L535 250L520 280L505 288L500 250L490 215L475 180Z" +
      "M490 305L540 290L590 272L580 290L510 320ZM650 248L700 235L715 250L680 262L655 262ZM390 0L425 15L430 35L400 20ZM370 30L385 38L375 42ZM760 130L775 125L765 135Z" +
      "M240 335L255 340L245 360ZM670 0H690L675 8ZM860 1300L885 1292L880 1310L862 1312Z",
    solid:
      "M0 34H123V0M130 20L145 40L160 52L205 55L215 68L225 60L255 72L295 75L330 64L400 98L440 120L465 150L510 180L522 275L490 300L508 318L590 290M650 245H685L720 210L850 190L880 175L890 150L918 98L935 105L950 98L962 110V170L990 205M245 1068H305V1105M245 1068L238 1082L265 1110M305 1068L330 1050M212 1160V1140M278 1180L305 1160L350 1185V1195M380 1195L382 1180L410 1172L440 1155L490 1148M412 1258L475 1265M800 1310L805 1285L825 1255L855 1235M840 1015L835 1045L845 1062M0 818L60 831",
    dashed:
      "M60 45L65 110L82 157L85 250L100 355L140 400L142 575M0 157H80M0 268H60L85 290M82 250H240M105 355H240V400L280 450L310 490L280 510L265 560L235 610L240 660M0 408H140M0 480H140M142 497H715M265 547H490M142 575L160 580V718M158 611H235M332 547V700M420 547L437 670M340 675L545 685M490 550L560 640M355 315V430L310 490M440 315V420M573 290V390M355 315H500M573 305H750L770 330M573 388H700M262 285H350M215 110L210 150L262 290M380 175L372 300M440 420L510 430L573 388M510 430L540 480L640 400L690 440M430 495L520 440M604 0V95L640 140L700 180M795 230V300L790 345M850 190L845 250L880 270M120 585H160M0 572L120 585M215 110L300 80M940 80L1010 72",
  },
];

const tileOf = (id: string) => tiles.find((t) => t.id === id)!;
const locate = (id: string, u: number, v: number) => {
  const t = tileOf(id);
  return { x: t.x + (u * t.w) / SIDE, y: t.y + (v * t.h) / SIDE };
};

function mulberry(seed: number) {
  let a = seed;
  return () => {
    a = (a + 0x6d2b79f5) | 0;
    let t = Math.imul(a ^ (a >>> 15), 1 | a);
    t = (t + Math.imul(t ^ (t >>> 7), 61 | t)) ^ t;
    return ((t ^ (t >>> 14)) >>> 0) / 4294967296;
  };
}

// Builds one path of small jagged polygons scattered inside an ellipse.
function specklePath([cx, cy, rx, ry, count, size]: Speckle, seed: number) {
  const rnd = mulberry(seed);
  let d = "";
  for (let i = 0; i < count; i++) {
    const a = rnd() * Math.PI * 2;
    const r = Math.pow(rnd(), 0.6) * 1.1;
    const px = cx + Math.cos(a) * r * rx;
    const py = cy + Math.sin(a) * r * ry;
    const n = 5 + Math.floor(rnd() * 5);
    const tilt = rnd() * Math.PI;
    const stretch = 0.25 + rnd() * 0.55;
    const s = size * (0.3 + Math.pow(rnd(), 2) * 1.3);
    for (let k = 0; k < n; k++) {
      const t = (k / n) * Math.PI * 2;
      const q = s * (0.3 + rnd() * 0.9);
      const ex = Math.cos(t) * q;
      const ey = Math.sin(t) * q * stretch;
      const x = px + ex * Math.cos(tilt) - ey * Math.sin(tilt);
      const y = py + ex * Math.sin(tilt) + ey * Math.cos(tilt);
      d += `${k ? "L" : "M"}${x.toFixed(0)} ${y.toFixed(0)}`;
    }
    d += "Z";
  }
  return d;
}

function TileArt({ tile, seed }: { tile: Tile; seed: number }) {
  const line = { fill: "none", vectorEffect: "non-scaling-stroke" as const };
  return (
    <svg x={tile.x} y={tile.y} width={tile.w} height={tile.h} viewBox={`0 0 ${SIDE} ${SIDE}`} preserveAspectRatio="none">
      <clipPath id={`land-${tile.id}`}>
        <path d={tile.land} />
      </clipPath>
      <rect width={SIDE} height={SIDE} fill={C.water} />
      <path d={tile.land} fill={tile.base} />
      <g clipPath={`url(#land-${tile.id})`}>
        {tile.cover.map(([d, fill]) => (
          <path key={d} d={d} fill={fill} />
        ))}
        {tile.speckles.map((s, i) => (
          <path key={i} d={specklePath(s, seed + i * 17)} fill={s[6]} opacity={0.8} />
        ))}
      </g>
      <path d={tile.lakes} fill={C.water} />
      <path d={tile.dashed} stroke="#8d918e" strokeWidth={1.2} strokeDasharray="4 3" {...line} />
      <path d={tile.solid} stroke="#7b7f7d" strokeWidth={1.3} {...line} />
    </svg>
  );
}

const regions: Record<string, [string, number, number][]> = {
  nw: [["YT", 382, 754], ["NT", 889, 718], ["AB", 1041, 1191], ["SK", 1330, 1308], ["BC", 734, 1294]],
  ne: [["NU", 137, 570], ["MB", 61, 1205], ["ON", 384, 1457], ["QC", 799, 1468], ["NL", 1170, 1332]],
  sw: [
    ["WA", 888, 105], ["OR", 870, 241], ["ID", 1069, 253], ["MT", 1217, 122], ["ND", 1506, 101], ["SD", 1505, 215],
    ["WY", 1277, 269], ["NE", 1532, 324], ["NV", 986, 386], ["UT", 1147, 409], ["CO", 1340, 434], ["CA", 891, 476],
    ["AZ", 1148, 571], ["NM", 1327, 571], ["TX", 1542, 661],
  ],
  se: [
    ["MN", 139, 148], ["WI", 293, 205], ["MI", 445, 241], ["IA", 172, 307], ["IL", 297, 343], ["IN", 401, 371],
    ["OH", 503, 357], ["KS", 37, 433], ["MO", 203, 438], ["KY", 450, 459], ["WV", 559, 433], ["PA", 659, 347],
    ["MD", 659, 390], ["DE", 732, 414], ["VA", 664, 468], ["NC", 626, 527], ["TN", 385, 525], ["OK", 60, 532],
    ["AR", 205, 538], ["MS", 291, 604], ["AL", 387, 623], ["SC", 575, 594], ["GA", 493, 647], ["LA", 230, 697],
    ["FL", 547, 777], ["NY", 728, 271], ["NH", 847, 240], ["MA", 860, 295], ["ME", 925, 195], ["NB", 1017, 121],
    ["PE", 1122, 148], ["NS", 1098, 205],
  ],
};

// tile, name, centre u, centre v, width in px, font size
const countries: [string, string, number, number, number, number][] = [
  ["nw", "Canada", 1141, 965, 74, 21],
  ["sw", "United States", 1469, 386, 132, 21],
  ["sw", "Mexico", 1435, 893, 71, 21],
  ["se", "Cuba", 622, 961, 42, 18],
  ["se", "Puerto Rico", 1005, 1008, 94, 18],
  ["se", "Guatemala", 272, 1124, 87, 18],
  ["se", "Nicaragua", 477, 1221, 82, 18],
  ["se", "Venezuela", 1010, 1325, 100, 20],
];

const waters: [string, string, number, number, number][] = [
  ["ne", "Northwestern", 590, 505, 120],
  ["ne", "Passages", 591, 558, 87],
  ["ne", "Hudson Bay", 427, 993, 107],
  ["se", "Gulf of", 280, 830, 60],
  ["se", "Mexico", 280, 876, 64],
  ["se", "Caribbean Sea", 744, 1163, 128],
];

const Region = styled.text`
  font: 18px Roboto, Arial, sans-serif;
  fill: #4d6966;
  text-anchor: middle;
  stroke: rgba(255, 255, 255, 0.75);
  stroke-width: 6px;
  stroke-linejoin: round;
  paint-order: stroke;
`;

const Country = styled(Region)<{ $size: number; $start?: boolean }>`
  font-size: ${(p) => p.$size}px;
  font-weight: 500;
  fill: #202124;
  text-anchor: ${(p) => (p.$start ? "start" : "middle")};
`;

const WaterName = styled.text<{ $start?: boolean }>`
  font: 20px Roboto, Arial, sans-serif;
  fill: #5083c4;
  text-anchor: ${(p) => (p.$start ? "start" : "middle")};
`;

const MarkerLetter = styled.text`
  font: 29px Roboto, Arial, sans-serif;
  fill: #000;
  stroke: #000;
  stroke-width: 0.3px;
  text-anchor: middle;
`;

const Logo = styled.text`
  font: 600 41px Lato, "Open Sans", sans-serif;
  fill: #fff;
  stroke: #fff;
  stroke-width: 0.8px;
  filter: drop-shadow(0 0 1.5px rgba(60, 100, 140, 0.75));
`;

const CYAN = "#22cccc";
const BLUE = "#0819c8";
const GREEN = "#1fcc22";
const RED = "#cc0814";

const markers: [string, number, number, string][] = [
  ["S", 1456, 492, CYAN],
  ["S", 1642, 558, BLUE],
  ["E", 1348, 570, GREEN],
  ["S", 1356, 598, GREEN],
  ["S", 1910, 634, RED],
  ["E", 1844, 662, RED],
];

const headings: [number, number][] = [
  [1519, 513],
  [1565.5, 529.5],
  [1612, 546],
];

function MapArt() {
  return (
    <MapCanvas viewBox="1076 24 1108 1108">
      {tiles.map((t, i) => (
        <TileArt key={t.id} tile={t} seed={100 + i * 997} />
      ))}
      {Object.entries(regions).flatMap(([id, list]) =>
        list.map(([name, u, v]) => {
          const p = locate(id, u, v);
          return (
            <Region key={name} x={p.x} y={p.y + 6.5}>
              {name}
            </Region>
          );
        })
      )}
      {waters.map(([id, name, u, v, w]) => {
        const p = locate(id, u, v);
        return (
          <WaterName key={name + v} x={p.x} y={p.y + 7} textLength={w}>
            {name}
          </WaterName>
        );
      })}
      <WaterName $start x={2118} y={423} textLength={118}>
        Labrador Sea
      </WaterName>
      {countries.map(([id, name, u, v, w, size]) => {
        const p = locate(id, u, v);
        return (
          <Country key={name} $size={size} x={p.x} y={p.y + size * 0.35} textLength={w}>
            {name}
          </Country>
        );
      })}
      <Country $start $size={21} x={2172.5} y={217}>
        Greenland
      </Country>

      {headings.map(([x, y]) => (
        <path key={x} transform={`translate(${x} ${y})`} d="M-32 -12.5L-12 -14.5L-20.5 6Z" fill={BLUE} />
      ))}
      <path d="M1456 492L1642 558" stroke={CYAN} strokeWidth={6} />
      {headings.map(([x, y]) => (
        <path key={x} transform={`translate(${x} ${y})`} d="M1 0L-8 -11Q-12 -16 -15 -11.5L-21 2Q-22 7 -17 6.5Z" fill={CYAN} />
      ))}
      <path d="M1910 634L1844 662" stroke={RED} strokeWidth={6} />
      <path d="M1856 657L1860 646Q1865 642 1868 648L1872 659Q1871 663 1862 663Z" fill={RED} />
      {markers.map(([letter, x, y, color]) => (
        <g key={`${x}-${y}`}>
          <circle cx={x} cy={y} r={20} fill="#f8f8f8" stroke={color} strokeWidth={6} />
          <MarkerLetter x={x} y={y + 10.3}>
            {letter}
          </MarkerLetter>
        </g>
      ))}
      <Logo x={1089} y={1117} textLength={125} lengthAdjust="spacingAndGlyphs">
        Google
      </Logo>
    </MapCanvas>
  );
}

export default function App() {
  return (
    <>
      <GlobalStyle />
      <Page>
        <BackdropArt />
        <Workspace>
          <FormPanel>
            <Heading>Start Point</Heading>
            <Field $height={50}>
              <FieldName>Latitude</FieldName>
              <Input defaultValue="50" />
            </Field>
            <Field $gap={8}>
              <FieldName>Longitude</FieldName>
              <Input defaultValue="-100" />
            </Field>
            <Heading $gap={16}>End Point</Heading>
            <Field>
              <FieldName>Latitude</FieldName>
              <Input defaultValue="51" />
            </Field>
            <Field $gap={8}>
              <FieldName>Longitude</FieldName>
              <Input defaultValue="-100" />
            </Field>
            <Heading $gap={16}>Description</Heading>
            <TextArea defaultValue="Test Movement" spellCheck={false} />
            <Heading $gap={10}>Color</Heading>
            <ColorWell>
              <Swatch />
            </ColorWell>
            <Actions>
              <Button type="button" $edge="#1ca0ff" $fill="#157efb">
                BACK
              </Button>
              <Button type="button" $edge="#2fbb1e" $fill="#399918">
                SAVE
              </Button>
            </Actions>
          </FormPanel>
          <MapColumn>
            <MapFrame>
              <MapArt />
              <ControlStack>
                <ControlCard>
                  <IconButton aria-label="Toggle fullscreen">
                    <svg width="36" height="36" viewBox="0 0 36 36" fill="none" stroke="#666" strokeWidth="4">
                      <path d="M2 12V2H12M24 2H34V12M34 24V34H24M12 34H2V24" />
                    </svg>
                  </IconButton>
                </ControlCard>
                <ControlCard>
                  <IconButton aria-label="Zoom in">
                    <svg width="36" height="36" viewBox="0 0 36 36" stroke="#666" strokeWidth="8">
                      <path d="M0 18H36M18 0V36" />
                    </svg>
                  </IconButton>
                  <Divider />
                  <IconButton aria-label="Zoom out">
                    <svg width="36" height="36" viewBox="0 0 36 36" stroke="#666" strokeWidth="8">
                      <path d="M0 18H36" />
                    </svg>
                  </IconButton>
                </ControlCard>
              </ControlStack>
              <Attribution>
                <span>Map data ©2021 Google, INEGI</span>
                <span>Terms of Use</span>
              </Attribution>
            </MapFrame>
            <Tabs>
              <Tab disabled>MOVEMENTS</Tab>
              <Tab>ROUTE</Tab>
              <Tab>ALL</Tab>
            </Tabs>
          </MapColumn>
        </Workspace>
      </Page>
    </>
  );
}
